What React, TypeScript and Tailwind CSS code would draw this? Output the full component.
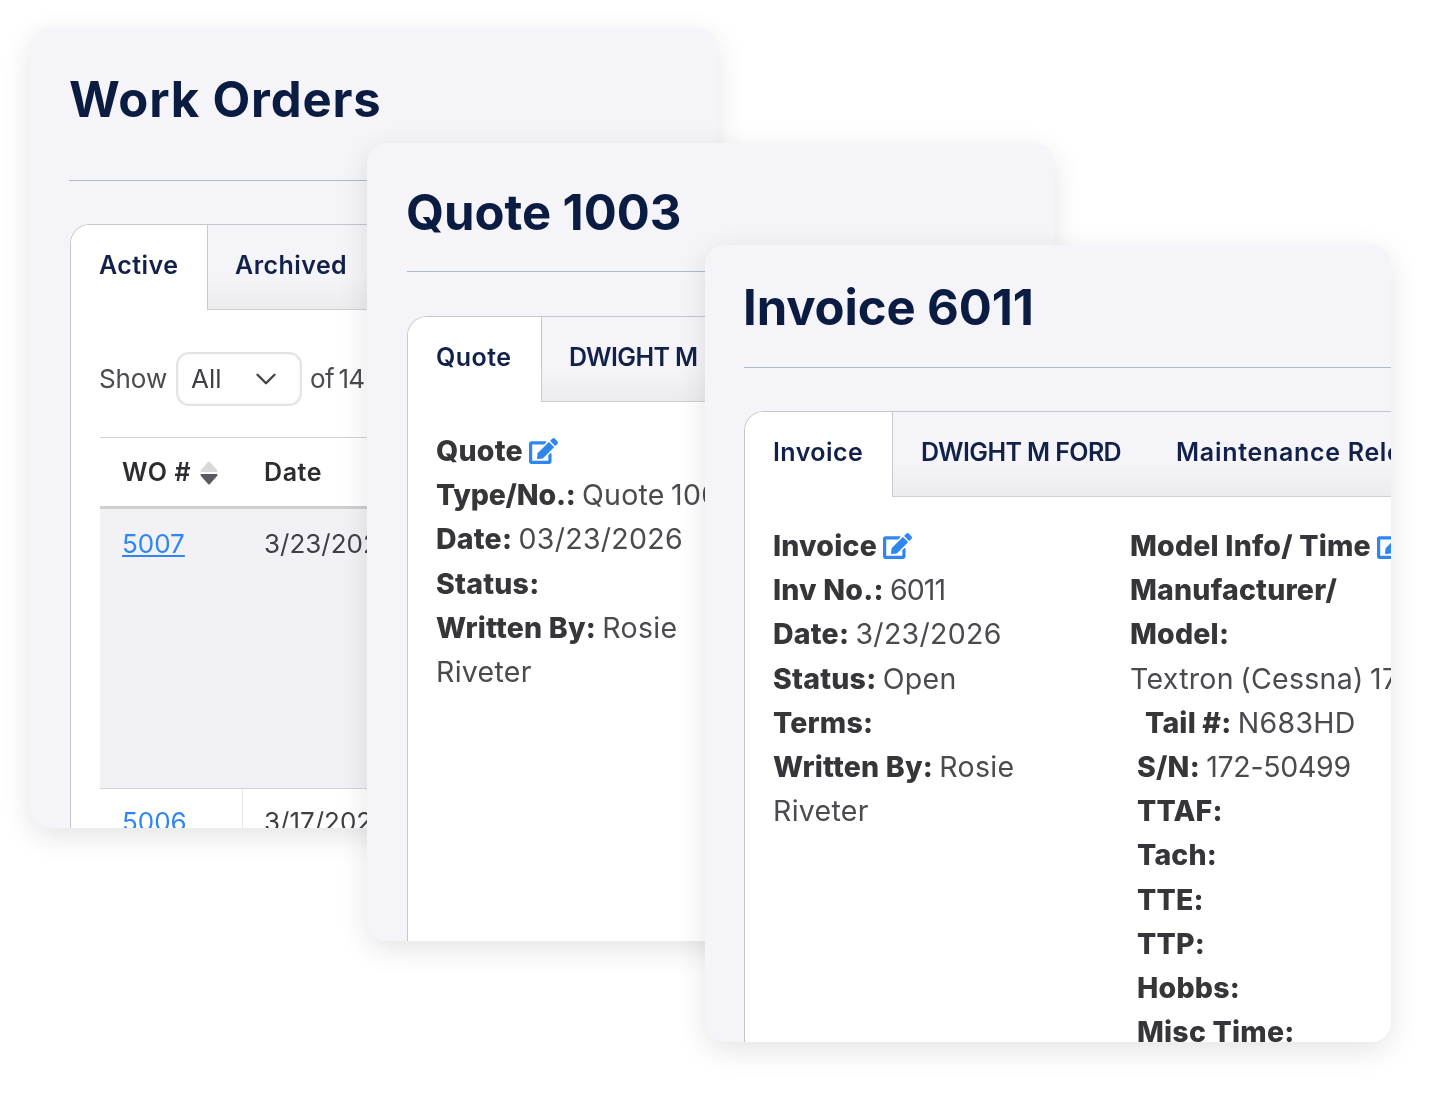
import { ChevronDown } from "lucide-react";
import { FaEdit } from "react-icons/fa";

const L = ({ children }: { children: React.ReactNode }) => (
  <span className="font-extrabold tracking-[0.2px] [word-spacing:0px] text-[#36363a]">{children}</span>
);

const Edit = () => (
  <FaEdit className="inline-block ml-[6px] w-[29px] h-[28px] text-[#2f86ef] align-[-4px]" />
);

const Active = ({ w, children }: { w: string; children: React.ReactNode }) => (
  <div className={`${w} shrink-0 h-[85px] pl-[28px] pb-[4px] flex items-center bg-white border-r border-[#c9c9cf] text-[25px] font-semibold tracking-[0.45px] text-[#11214a]`}>
    {children}
  </div>
);

const Idle = ({ cls, children }: { cls: string; children: React.ReactNode }) => (
  <div className={`${cls} shrink-0 h-[85px] px-[27px] pb-[4px] flex items-center text-[25px] font-semibold text-[#11214a]`}>
    {children}
  </div>
);

const Strip = ({ children }: { children: React.ReactNode }) => (
  <div className="flex h-[85px] bg-gradient-to-b from-[#f5f4f8] from-60% to-[#ecebef] border-b border-[#cfcfd4]">
    {children}
  </div>
);

const Title = ({ cls, children }: { cls: string; children: React.ReactNode }) => (
  <h1 className={`${cls} -ml-px leading-[60px] text-[49px] font-bold text-[#0b1c42] whitespace-nowrap`}>
    {children}
  </h1>
);

const cardCls =
  "absolute rounded-[20px] overflow-hidden bg-[#f5f4f8] shadow-[0_8px_30px_rgba(0,0,0,0.11)]";
const panelCls =
  "w-[1100px] h-[700px] rounded-tl-[20px] border-l border-t border-[#c6c6cc] bg-white overflow-hidden";
const bodyCls =
  "pl-[28px] pt-[27px] text-[28.5px] leading-[44.2px] tracking-[0.3px] [word-spacing:-2px] text-[#4a4a50]";

function WorkOrders() {
  return (
    <section className={`${cardCls} w-[687px] left-[30px] top-[28px] h-[800px] pl-[40px]`}>
      <Title cls="pt-[42px] mb-[50px] tracking-[0.85px]">Work Orders</Title>
      <div className="-ml-px w-[1100px] border-t border-[#aebacd] mb-[43px]" />
      <div className={panelCls}>
        <Strip>
          <Active w="w-[137px]">Active</Active>
          <Idle cls="tracking-[0.45px]">Archived</Idle>
        </Strip>
        <div className="pl-[28px] pt-[42px] text-[#4a4a50] text-[26px]">
          <div className="flex items-center h-[54px] whitespace-nowrap">
            <span className="pb-[2px] tracking-[-0.1px]">Show</span>
            <div className="ml-[9px] w-[126px] h-[54px] px-[13px] flex items-center justify-between rounded-[13px] border-2 border-[#e3e3e6] shadow-[inset_0_0_3px_rgba(0,0,0,0.08)]">
              <span className="text-[#3f3f45] pb-[2px]">All</span>
              <ChevronDown className="w-[34px] h-[34px] text-[#444] mr-[4px]" strokeWidth={1.7} />
            </div>
            <span className="ml-[8px] pb-[2px] tracking-[-0.7px] [word-spacing:-2px]">of 14</span>
          </div>
          <div className="mt-[31px] ml-px w-[600px] border-t border-[#d3d3d7]">
            <div className="flex h-[71px] pt-[2px] items-center border-b-[3px] border-[#cfcfd3] text-[25px] font-semibold tracking-[0.6px] text-[#2d2d31]">
              <div className="w-[143px] pl-[22px] flex items-center gap-[9px]">
                <span>WO #</span>
                <svg viewBox="0 0 18 24" className="w-[18px] h-[24px]">
                  <path d="M9 1.5 L16.5 10 H1.5 Z" fill="#d9d9dc" stroke="#d9d9dc" strokeLinejoin="round" strokeWidth="2" />
                  <path d="M1.5 14 H16.5 L9 22.5 Z" fill="#5a5a60" stroke="#5a5a60" strokeLinejoin="round" strokeWidth="2" />
                </svg>
              </div>
              <div className="pl-[21px]">Date</div>
            </div>
            <div className="flex h-[279px] bg-[#f2f1f5] text-[26px]">
              <div className="w-[143px] pl-[22px] pt-[15px]">
                <a className="text-[#2f86ef] underline">5007</a>
              </div>
              <div className="pl-[21px] pt-[15px] text-[#3f3f45] whitespace-nowrap">3/23/2026</div>
            </div>
            <div className="flex h-[90px] border-t border-[#d3d3d7] text-[26px]">
              <div className="w-[143px] pl-[22px] pt-[13px] border-r border-[#e6e6e9]">
                <a className="text-[#2f86ef] underline">5006</a>
              </div>
              <div className="pl-[21px] pt-[13px] text-[#3f3f45] whitespace-nowrap">3/17/2026</div>
            </div>
          </div>
        </div>
      </div>
    </section>
  );
}

function Quote() {
  return (
    <section className={`${cardCls} w-[687px] left-[367px] top-[143px] h-[798px] pl-[40px]`}>
      <Title cls="pt-[40px] mb-[28px] tracking-[-0.05px]">Quote 1003</Title>
      <div className="w-[1100px] border-t border-[#aebacd] mb-[44px]" />
      <div className={panelCls}>
        <Strip>
          <Active w="w-[134px]">Quote</Active>
          <Idle cls="tracking-[-0.6px]">DWIGHT M FORD</Idle>
        </Strip>
        <div className={`${bodyCls} w-[300px]`}>
          <div className="whitespace-nowrap">
            <L>Quote</L>
            <Edit />
          </div>
          <div className="whitespace-nowrap">
            <span className="font-extrabold tracking-[-0.2px] text-[#36363a]">Type/No.:</span> Quote 1003
          </div>
          <div className="whitespace-nowrap">
            <L>Date:</L> 03/23/2026
          </div>
          <div>
            <L>Status:</L>
          </div>
          <div>
            <L>Written By:</L> Rosie Riveter
          </div>
        </div>
      </div>
    </section>
  );
}

function Invoice() {
  const rows = ["TTAF:", "Tach:", "TTE:", "TTP:", "Hobbs:", "Misc Time:"];
  return (
    <section className={`${cardCls} w-[686px] left-[705px] top-[245px] h-[797px] pl-[39px]`}>
      <Title cls="pt-[33px] mb-[29px] tracking-[-0.1px]">Invoice 6011</Title>
      <div className="w-[1100px] border-t border-[#aebacd] mb-[43px]" />
      <div className={panelCls}>
        <Strip>
          <Active w="w-[148px]">Invoice</Active>
          <Idle cls="ml-px tracking-[-0.6px]">DWIGHT M FORD</Idle>
          <Idle cls="ml-px tracking-[0.7px]">Maintenance Release</Idle>
        </Strip>
        <div className={`${bodyCls} flex`}>
          <div className="w-[357px] shrink-0">
            <div className="whitespace-nowrap">
              <L>Invoice</L>
              <Edit />
            </div>
            <div>
              <L>Inv No.:</L> <span className="tracking-[-0.9px]">6011</span>
            </div>
            <div>
              <L>Date:</L> 3/23/2026
            </div>
            <div>
              <L>Status:</L> Open
            </div>
            <div>
              <L>Terms:</L>
            </div>
            <div className="w-[280px]">
              <L>Written By:</L> Rosie Riveter
            </div>
          </div>
          <div className="whitespace-nowrap">
            <div>
              <L>Model Info/ Time</L>
              <Edit />
            </div>
            <div>
              <L>Manufacturer/</L>
            </div>
            <div>
              <L>Model:</L>
            </div>
            <div>Textron (Cessna) 172S</div>
            <div className="pl-[15px]">
              <L>Tail #:</L> N683HD
            </div>
            <div className="pl-[7px]">
              <L>S/N:</L> <span className="tracking-[-0.3px]">172-50499</span>
            </div>
            {rows.map((r) => (
              <div key={r} className="pl-[7px]">
                <L>{r}</L>
              </div>
            ))}
          </div>
        </div>
      </div>
    </section>
  );
}

export default function App() {
  return (
    <div className="relative w-[1446px] h-[1106px] bg-white overflow-hidden blur-[0.4px] font-['Inter',sans-serif]">
      <WorkOrders />
      <Quote />
      <Invoice />
    </div>
  );
}
